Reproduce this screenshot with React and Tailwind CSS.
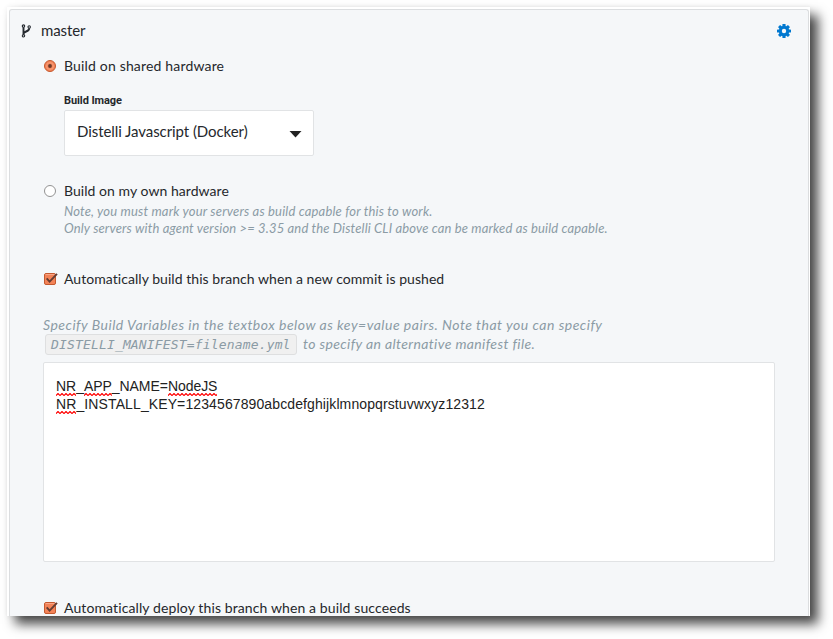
import React from "react";

function RadioOn() {
  return (
    <svg width="14" height="14" viewBox="0 0 14 14" className="block shrink-0">
      <circle cx="7" cy="7" r="5.5" fill="#f38358" stroke="#c4592f" />
      <circle cx="7" cy="7" r="3.4" fill="none" stroke="#f79d78" strokeWidth="1" />
      <circle cx="7" cy="7" r="1.9" fill="#6b3a2a" />
    </svg>
  );
}

function RadioOff() {
  return (
    <svg width="14" height="14" viewBox="0 0 14 14" className="block shrink-0">
      <circle cx="7" cy="7" r="5.5" fill="#fff" stroke="#929292" />
    </svg>
  );
}

function Check() {
  return (
    <svg width="15" height="14" viewBox="0 0 15 14" className="block shrink-0">
      <rect x="1.5" y="1.5" width="11" height="11" rx="1.5" fill="#f38358" stroke="#c4592f" />
      <path d="M2.5 2.5H11.5" stroke="#f9a788" />
      <path d="M3.7 6.4L6.6 9.6L14 1.8" fill="none" stroke="#643c31" strokeWidth="1.9" />
    </svg>
  );
}

function Branch() {
  return (
    <svg width="10" height="14" viewBox="0 0 10 14" className="block shrink-0" fill="none" stroke="#252a30">
      <circle cx="2.5" cy="2.1" r="1.2" strokeWidth="1.1" />
      <circle cx="2.5" cy="11.8" r="1.2" strokeWidth="1.1" />
      <circle cx="8.2" cy="3" r="1.2" strokeWidth="1.1" />
      <path d="M2.5 3.3V10.6M8.2 4.2C8.2 8.2 2.8 6.8 2.6 9.8" strokeWidth="1.9" />
    </svg>
  );
}

function Gear() {
  return (
    <svg width="14" height="14" viewBox="0 0 14 14" className="block" fill="#0078d0">
      {[0, 45, 90, 135].map((a) => (
        <rect key={a} x="5.4" y="0" width="3.2" height="14" rx="0.6" transform={`rotate(${a} 7 7)`} />
      ))}
      <circle cx="7" cy="7" r="5.2" />
      <circle cx="7" cy="7" r="2.2" fill="#f5f7f9" />
    </svg>
  );
}

function Misspelled({ children }) {
  return (
    <span className="relative">
      {children}
      <svg className="absolute bottom-[-2px] left-0 h-[3px] w-full" fill="none" stroke="#f00">
        <defs>
          <pattern id="squiggle" width="4" height="3" patternUnits="userSpaceOnUse">
            <path d="M-1 1.5L0 2.5L2 0.5L4 2.5L5 1.5" strokeWidth="1.2" />
          </pattern>
        </defs>
        <rect width="100%" height="3" fill="url(#squiggle)" stroke="none" />
      </svg>
    </span>
  );
}

export default function App() {
  return (
    <div className="h-[639px] w-[833px] overflow-hidden bg-white pt-[7px] pl-[7px] font-[Lato,sans-serif] text-[#25282c]">
      <div className="h-[609px] w-[803px] bg-white pt-[2px] pl-[2px] shadow-[8px_8px_11px_0px_rgba(0,0,0,0.72),0_0_5px_rgba(0,0,0,0.06)]">
        <div className="h-[607px] w-[800px] overflow-hidden rounded-t-[3px] border border-b-0 border-[#dbdddf] bg-[#f5f7f9]">
          <div className="flex h-[42px] items-center justify-between pr-[17px] pl-[11px]">
            <div className="flex items-center">
              <Branch />
              <span className="ml-[10px] pb-[2px] text-[15px] leading-5 tracking-[-0.1px]">master</span>
            </div>
            <Gear />
          </div>

          <div className="flex h-[28px] items-center pl-[33px]">
            <RadioOn />
            <span className="ml-[7px] pb-[2px] text-[14px] tracking-[0.17px]">Build on shared hardware</span>
          </div>

          <div className="mt-[13px] ml-[54px] w-[250px]">
            <div className="h-[17px] pt-px font-[Roboto,sans-serif] text-[11px] leading-[14px] font-bold tracking-[-0.08px]">Build Image</div>
            <div className="flex h-[46px] items-center justify-between rounded-[2px] border border-[#e1e3e5] bg-white pr-[11px] pl-[12px]">
              <span className="pb-[4px] text-[15px] leading-5 tracking-[-0.07px]">Distelli Javascript (Docker)</span>
              <svg width="13" height="7" viewBox="0 0 13 7" className="mt-[2px]">
                <path d="M0.5 0H12.5L6.5 6.6Z" fill="#222" />
              </svg>
            </div>
          </div>

          <div className="mt-[24px] flex h-[22px] items-center pl-[33px]">
            <RadioOff />
            <span className="ml-[7px] pb-px text-[14px] tracking-[0.05px]">Build on my own hardware</span>
          </div>
          <div className="ml-[54px] h-[36px] pt-px text-[13px] leading-[17px] whitespace-nowrap text-[#8b9ba5] italic">
            <div className="tracking-[0.18px]">Note, you must mark your servers as build capable for this to work.</div>
            <div className="tracking-[0.15px]">Only servers with agent version &gt;= 3.35 and the Distelli CLI above can be marked as build capable.</div>
          </div>

          <div className="mt-[30px] flex h-[22px] items-center pl-[33px]">
            <Check />
            <span className="ml-[6px] pb-[2px] text-[14px] tracking-[0.05px]">Automatically build this branch when a new commit is pushed</span>
          </div>

          <div className="mt-[26px] ml-[33px] h-[36px] text-[14px] leading-[18px] whitespace-nowrap text-[#8b9ba5] italic">
            <div className="tracking-[0.5px]">
              Specify Build Variables in the textbox below as key=value pairs. Note that you can specify
            </div>
            <div className="flex h-[21px] items-center pl-[2px]">
              <code className="h-[21px] w-[252px] shrink-0 rounded-[3px] border border-[#dedfe0] bg-[#f0f0f0] pl-[5px] font-['DejaVu_Sans_Mono',monospace] text-[13px] leading-[19px] tracking-[0.16px]">
                DISTELLI_MANIFEST=filename.yml
              </code>
              <span className="ml-[6px] pb-px tracking-[0.38px]">to specify an alternative manifest file.</span>
            </div>
          </div>

          <div className="mt-[10px] ml-[33px] h-[200px] w-[732px] rounded-[2px] border border-[#e1e3e5] bg-white pt-[14px] pl-[12px] font-['Liberation_Sans',sans-serif] text-[14px] leading-[18px] text-[#222]">
            <div className="tracking-[-0.05px]">
              <Misspelled>NR</Misspelled>_<Misspelled>APP</Misspelled>_NAME=<Misspelled>NodeJS</Misspelled>
            </div>
            <div className="tracking-[0.11px]">
              <Misspelled>NR</Misspelled>_INSTALL_KEY=1234567890abcdefghijklmnopqrstuvwxyz12312
            </div>
          </div>

          <div className="mt-[35px] flex h-[22px] items-center pl-[33px]">
            <Check />
            <span className="ml-[6px] pb-[2px] text-[14px] tracking-[0.11px]">Automatically deploy this branch when a build succeeds</span>
          </div>
        </div>
      </div>
    </div>
  );
}
